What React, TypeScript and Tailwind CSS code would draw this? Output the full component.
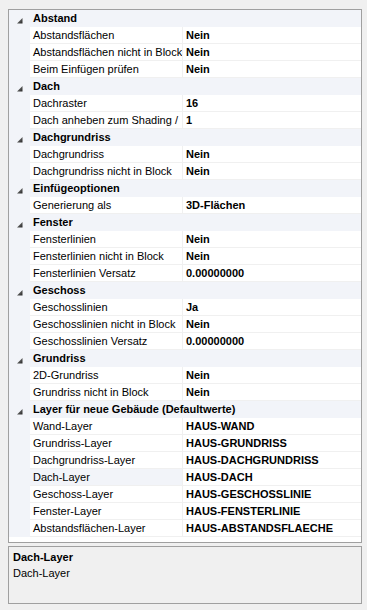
import React from "react";

type Row = { name: string; value: string; selected?: boolean };
type Cat = { title: string; rows: Row[] };

const data: Cat[] = [
  {
    title: "Abstand",
    rows: [
      { name: "Abstandsflächen", value: "Nein" },
      { name: "Abstandsflächen nicht in Block", value: "Nein" },
      { name: "Beim Einfügen prüfen", value: "Nein" },
    ],
  },
  {
    title: "Dach",
    rows: [
      { name: "Dachraster", value: "16" },
      { name: "Dach anheben zum Shading /", value: "1" },
    ],
  },
  {
    title: "Dachgrundriss",
    rows: [
      { name: "Dachgrundriss", value: "Nein" },
      { name: "Dachgrundriss nicht in Block", value: "Nein" },
    ],
  },
  {
    title: "Einfügeoptionen",
    rows: [{ name: "Generierung als", value: "3D-Flächen" }],
  },
  {
    title: "Fenster",
    rows: [
      { name: "Fensterlinien", value: "Nein" },
      { name: "Fensterlinien nicht in Block", value: "Nein" },
      { name: "Fensterlinien Versatz", value: "0.00000000" },
    ],
  },
  {
    title: "Geschoss",
    rows: [
      { name: "Geschosslinien", value: "Ja" },
      { name: "Geschosslinien nicht in Block", value: "Nein" },
      { name: "Geschosslinien Versatz", value: "0.00000000" },
    ],
  },
  {
    title: "Grundriss",
    rows: [
      { name: "2D-Grundriss", value: "Nein" },
      { name: "Grundriss nicht in Block", value: "Nein" },
    ],
  },
  {
    title: "Layer für neue Gebäude (Defaultwerte)",
    rows: [
      { name: "Wand-Layer", value: "HAUS-WAND" },
      { name: "Grundriss-Layer", value: "HAUS-GRUNDRISS" },
      { name: "Dachgrundriss-Layer", value: "HAUS-DACHGRUNDRISS" },
      { name: "Dach-Layer", value: "HAUS-DACH", selected: true },
      { name: "Geschoss-Layer", value: "HAUS-GESCHOSSLINIE" },
      { name: "Fenster-Layer", value: "HAUS-FENSTERLINIE" },
      { name: "Abstandsflächen-Layer", value: "HAUS-ABSTANDSFLAECHE" },
    ],
  },
];

function Arrow() {
  return (
    <svg width="21" height="17" viewBox="0 0 21 17" className="shrink-0">
      <defs>
        <linearGradient id="tg" x1="0" y1="0" x2="1" y2="1">
          <stop offset="0" stopColor="#8a8a8a" />
          <stop offset="1" stopColor="#262626" />
        </linearGradient>
      </defs>
      <polygon points="13.5,8 13.5,13.5 8,13.5" fill="url(#tg)" />
    </svg>
  );
}

export default function App() {
  return (
    <div
      className="w-[367px] h-[610px] bg-[#f0f0f0] pt-[9px] pl-[8px] text-[11px] text-black"
      style={{ fontFamily: '"Liberation Sans", Arial, sans-serif' }}
    >
      <div className="w-[354px] h-[534px] border border-[#a0a0a0] bg-white overflow-hidden flex flex-col">
        {data.map((cat) => (
          <div key={cat.title} className="flex flex-col">
            <div className="h-[17px] flex items-center bg-[#f2f4f9]">
              <Arrow />
              <span className="pl-[3px] font-bold whitespace-nowrap leading-[17px]">
                {cat.title}
              </span>
            </div>
            {cat.rows.map((r) => (
              <div key={r.name} className="h-[17px] flex bg-[#f2f4f9]">
                <div className="w-[21px] shrink-0" />
                <div
                  className={`w-[152px] shrink-0 border-b border-[#f0f0f0] pl-[3px] leading-[16px] whitespace-nowrap overflow-hidden ${
                    r.selected ? "bg-[#f2f4f9]" : "bg-white"
                  }`}
                >
                  {r.name}
                </div>
                <div className="w-px shrink-0 bg-[#f0f0f0]" />
                <div className="flex-1 bg-white border-b border-[#f0f0f0] pl-[3px] font-bold leading-[16px] whitespace-nowrap overflow-hidden">
                  {r.value}
                </div>
              </div>
            ))}
          </div>
        ))}
      </div>
      <div className="mt-[3px] w-[354px] h-[58px] border border-[#a0a0a0] bg-[#f0f0f0] pl-[4px] pt-[2px]">
        <div className="font-bold leading-[16px]">Dach-Layer</div>
        <div className="leading-[16px]">Dach-Layer</div>
      </div>
    </div>
  );
}
